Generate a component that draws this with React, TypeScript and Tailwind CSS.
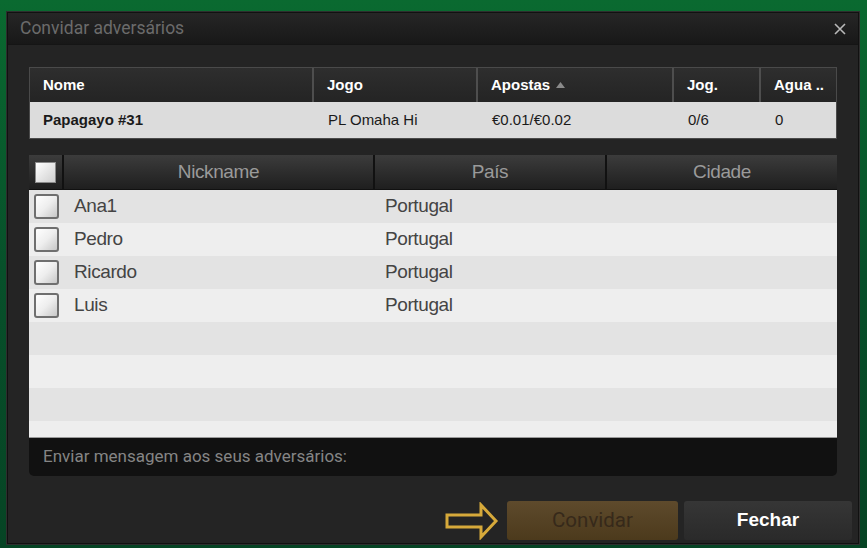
import React from "react";

const players = [
    { nick: "Ana1", country: "Portugal" },
    { nick: "Pedro", country: "Portugal" },
    { nick: "Ricardo", country: "Portugal" },
    { nick: "Luis", country: "Portugal" },
    { nick: "", country: "" },
    { nick: "", country: "" },
    { nick: "", country: "" },
    { nick: "", country: "" },
];

function Check({ header }: { header?: boolean }) {
    if (header) {
        return (
            <span className="block h-[21px] w-[21px] border border-[#8a8a8a] bg-gradient-to-br from-[#ffffff] to-[#cfcfcf]" />
        );
    }
    return (
        <span className="block h-[25px] w-[25px] rounded-[3px] border-2 border-[#6f6f6f] bg-gradient-to-br from-[#ffffff] via-[#eeeeee] to-[#c8c8c8]" />
    );
}

function Arrow() {
    return (
        <svg width="54" height="38" viewBox="0 0 54 38" fill="none">
            <path d="M2 13 H36 V3 L51 19 L36 35 V25 H2 Z" stroke="#d6a93a" strokeWidth="3" strokeLinejoin="miter" />
        </svg>
    );
}

export default function App() {
    return (
        <div className="h-[548px] w-[867px] overflow-hidden bg-gradient-to-b from-[#0a6a30] via-[#07502a] to-[#064424] pl-[7px] pt-[12px]">
            <div className="flex h-[532px] w-[852px] flex-col border border-[#111] bg-[#242424] shadow-[0_0_0_1px_#2e2e2e]">
                {/* title */}
                <div className="flex h-[32px] items-center justify-between border-b border-[#151515] bg-gradient-to-b from-[#262626] to-[#181818] pl-[12px] pr-[12px]">
                    <span className="font-['Roboto',sans-serif] text-[17.5px] text-[#6b6b6b]">Convidar adversários</span>
                    <svg width="12" height="12" viewBox="0 0 12 12">
                        <path d="M1 1 L11 11 M11 1 L1 11" stroke="#b8b8b8" strokeWidth="1.6" />
                    </svg>
                </div>

                <div className="flex flex-1 flex-col px-[21px] pt-[22px]">
                    {/* table info */}
                    <div className="w-[808px] border border-[#4a4a4a] font-['Liberation_Sans',Arial,sans-serif] text-[15px]">
                        <div className="flex h-[34px] bg-gradient-to-b from-[#2e2e2e] to-[#242424] font-bold text-white">
                            <div className="flex w-[284px] items-center border-r-2 border-[#4e4e4e] pl-[13px]">Nome</div>
                            <div className="flex w-[164px] items-center border-r-2 border-[#4e4e4e] pl-[13px]">Jogo</div>
                            <div className="flex w-[196px] items-center gap-[6px] border-r-2 border-[#4e4e4e] pl-[13px]">
                                Apostas
                                <svg width="9" height="6" viewBox="0 0 9 6"><path d="M0 6 L4.5 0 L9 6 Z" fill="#8a8a8a" /></svg>
                            </div>
                            <div className="flex w-[87px] items-center border-r-2 border-[#4e4e4e] pl-[13px]">Jog.</div>
                            <div className="flex flex-1 items-center pl-[13px]">Agua ..</div>
                        </div>
                        <div className="flex h-[36px] bg-[#dcdcdc] text-[#1a1a1a]">
                            <div className="flex w-[284px] items-center pl-[13px] font-bold">Papagayo #31</div>
                            <div className="flex w-[164px] items-center pl-[14px]">PL Omaha Hi</div>
                            <div className="flex w-[196px] items-center pl-[14px]">€0.01/€0.02</div>
                            <div className="flex w-[87px] items-center pl-[14px]">0/6</div>
                            <div className="flex flex-1 items-center pl-[14px]">0</div>
                        </div>
                    </div>

                    {/* players */}
                    <div className="mt-[16px] w-[808px] font-['Liberation_Sans',Arial,sans-serif]">
                        <div className="flex h-[35px] border-b border-[#111] bg-gradient-to-b from-[#3c3c3c] to-[#1f1f1f] text-[19px] tracking-[-0.4px] text-[#9a9a9a]">
                            <div className="flex w-[35px] items-center justify-center border-r-2 border-[#111]"><Check header /></div>
                            <div className="flex w-[311px] items-center justify-center border-r-2 border-[#111]">Nickname</div>
                            <div className="flex w-[232px] items-center justify-center border-r-2 border-[#111]">País</div>
                            <div className="flex flex-1 items-center justify-center">Cidade</div>
                        </div>
                        <div className="h-[248px] overflow-hidden border-b border-[#9a9a9a]">
                            {players.map((p, i) => (
                                <div
                                    key={i}
                                    className={`flex h-[33px] items-center text-[19px] tracking-[-0.4px] text-[#444] ${i % 2 === 0 ? "bg-[#e3e3e3]" : "bg-[#eeeeee]"}`}
                                >
                                    <div className="flex w-[35px] justify-center">{p.nick && <Check />}</div>
                                    <div className="w-[311px] pl-[10px]">{p.nick}</div>
                                    <div className="pl-[10px]">{p.country}</div>
                                </div>
                            ))}
                        </div>
                    </div>

                    {/* message */}
                    <div className="flex h-[38px] w-[808px] items-center rounded-b-[5px] bg-[#111111] pl-[14px] font-['Roboto',sans-serif] text-[17px] text-[#858585]">
                        Enviar mensagem aos seus adversários:
                    </div>

                    {/* buttons */}
                    <div className="mr-[-15px] mt-auto mb-[3px] flex items-center justify-end gap-[6px]">
                        <div className="mr-[2px]"><Arrow /></div>
                        <button className="flex h-[39px] w-[171px] items-center justify-center rounded-[3px] bg-gradient-to-b from-[#5e4a2c] to-[#4c3a1c] font-['Roboto',sans-serif] text-[20.5px] text-[#36291a]">
                            Convidar
                        </button>
                        <button className="flex h-[39px] w-[168px] items-center justify-center rounded-[3px] bg-gradient-to-b from-[#363636] to-[#2a2a2a] font-['Liberation_Sans',Arial,sans-serif] text-[19px] font-bold text-white">
                            Fechar
                        </button>
                    </div>
                </div>
            </div>
        </div>
    );
}
